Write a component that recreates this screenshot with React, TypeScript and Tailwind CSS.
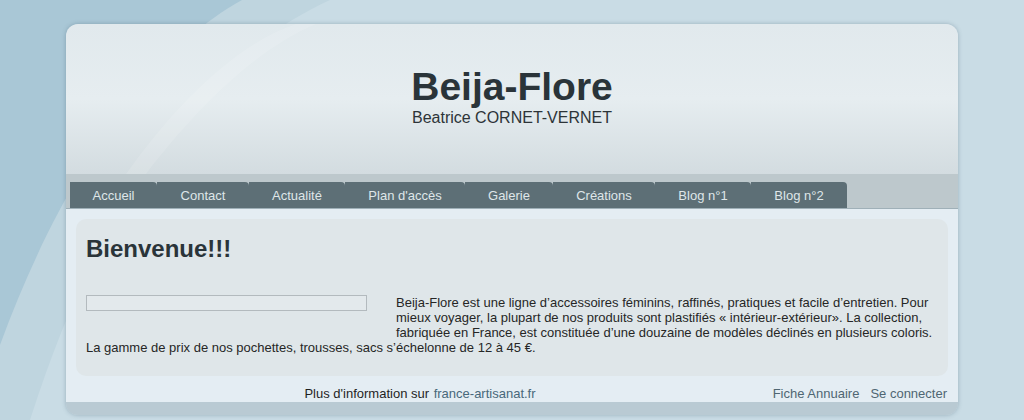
import React from 'react';

const tabs: [string, string][] = [
  ['Accueil', 'w-[87px]'],
  ['Contact', 'w-[92px]'],
  ['Actualité', 'w-[96px]'],
  ["Plan d'accès", 'w-[120px]'],
  ['Galerie', 'w-[88px]'],
  ['Créations', 'w-[102px]'],
  ['Blog n°1', 'w-[96px]'],
  ['Blog n°2', 'w-[96px]'],
];

const Backdrop: React.FC = () => (
  <svg className="absolute inset-0 h-full w-full" viewBox="0 0 1024 420" preserveAspectRatio="none">
    <rect width="1024" height="420" fill="#c9dce5" />
    <path d="M0 0 L330 0 C220 50 110 170 30 420 L0 420 Z" fill="#bfd5df" />
    <path d="M0 0 L242 0 C150 50 60 180 0 345 Z" fill="#a9c7d6" />
  </svg>
);

const App: React.FC = () => {
  return (
    <div className="relative h-[420px] w-[1024px] overflow-hidden font-['Liberation_Sans',Arial,sans-serif]">
      <Backdrop />

      <div className="relative mx-auto mt-[24px] w-[892px] rounded-[12px] shadow-[0_0_4px_rgba(60,90,110,0.35)]">
        {/* header */}
        <div className="relative h-[150px] overflow-hidden rounded-t-[12px] bg-gradient-to-b from-[#e1e9ed] via-[#e6edf0] to-[#d3dce0] pt-[40px] text-center text-[#2a3439]">
          <svg className="absolute inset-0 h-full w-full" viewBox="0 0 892 150" preserveAspectRatio="none">
            <path d="M60 150 C110 80 170 20 230 0 L250 0 C190 25 130 85 80 150 Z" fill="#ffffff" opacity="0.12" />
          </svg>
          <h1 className="relative text-[39px] font-bold leading-[46px]">Beija-Flore</h1>
          <p className="relative mt-[-1px] text-[16px] leading-[18px] text-[#2d3438]">Beatrice CORNET-VERNET</p>
        </div>

        {/* nav */}
        <div className="flex h-[35px] border-b border-[#9fb0b8] bg-[#bdc8cc] px-[4px] pt-[8px]">
          {tabs.map(([t, w]) => (
            <a
              key={t}
              href="#"
              className={`h-[26px] ${w} rounded-tr-[4px] bg-[#5d6f76] text-center text-[13px] leading-[27px] text-[#dfe6e9]`}
            >
              {t}
            </a>
          ))}
        </div>

        {/* content */}
        <div className="bg-[#e4edf3] px-[10px] pt-[10px]">
          <div className="rounded-[10px] bg-[#dfe6e9] px-[10px] pb-[21px] pt-[16px] text-[13px] leading-[15px] text-[#262626]">
            <h2 className="text-[24px] font-bold leading-[28px] text-[#2a3439]">Bienvenue!!!</h2>
            <div className="mt-[32px]">
              <div className="float-left mb-[27px] mr-[29px] h-[16px] w-[281px] border border-[#b3babe] bg-[#e3e9ec]" />
              Beija-Flore est une ligne d’accessoires féminins, raffinés, pratiques et facile d’entretien. Pour mieux voyager, la plupart de nos produits sont plastifiés « intérieur-extérieur». La collection, fabriquée en France, est constituée d’une douzaine de modèles déclinés en plusieurs coloris.
              <br />
              La gamme de prix de nos pochettes, trousses, sacs s’échelonne de 12 à 45 €.
            </div>
          </div>

          {/* footer */}
          <div className="flex pb-[1px] pt-[10px] text-[13px] leading-[15px]">
            <div className="w-[688px] text-center text-[#1f1f1f]">
              Plus d'information sur{' '}
              <a href="#" className="ml-[1px] text-[#48687a]">france-artisanat.fr</a>
            </div>
            <div className="ml-auto mr-[1px] flex gap-[11px] text-[#4f6672]">
              <a href="#">Fiche Annuaire</a>
              <a href="#">Se connecter</a>
            </div>
          </div>
        </div>

        {/* bottom band */}
        <div className="h-[13px] rounded-b-[12px] bg-[#b9cad3]" />
      </div>
    </div>
  );
};

export default App;
